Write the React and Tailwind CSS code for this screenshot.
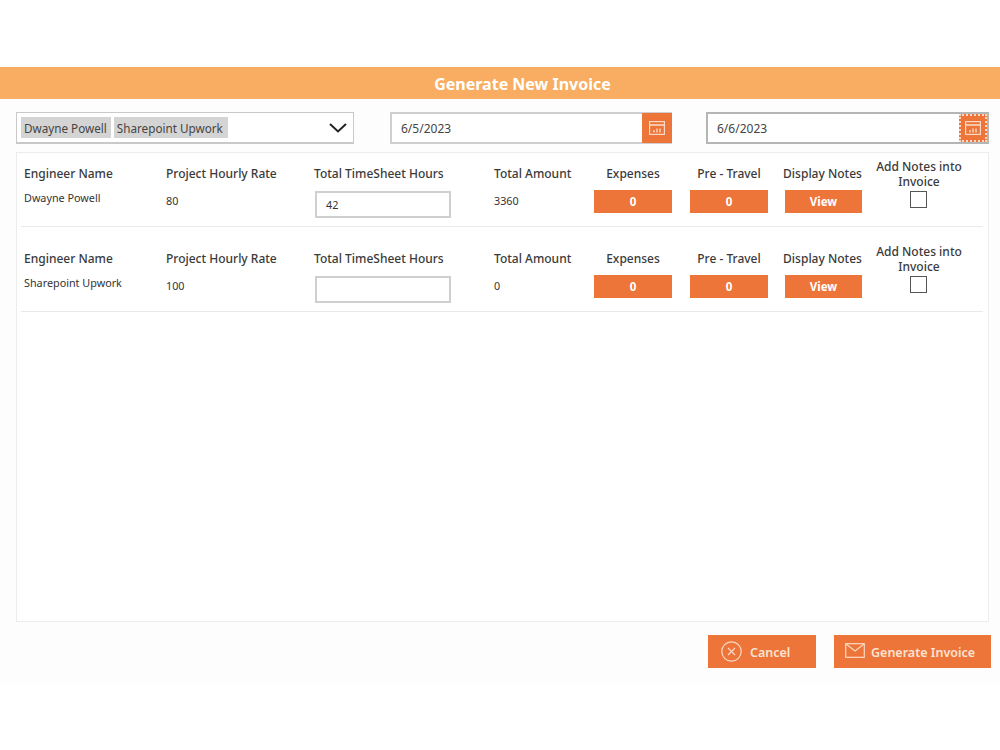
import React from 'react';

const rows = [
    { name: 'Dwayne Powell', rate: '80', hours: '42', amount: '3360', first: true },
    { name: 'Sharepoint Upwork', rate: '100', hours: '', amount: '0', first: false },
];

const CalendarIcon = () => (
    <svg width="18" height="16" viewBox="0 0 18 16" fill="none" stroke="#fbd9c4" strokeWidth="1.2">
        <rect x="1.6" y="1.6" width="14.8" height="12.8" />
        <path d="M1.6 5h14.8" strokeWidth="1.6" />
        <path d="M6 12.5v-2.5M9 12.5v-4M12 12.5v-4" strokeWidth="1.4" />
    </svg>
);

const OrangeButton = ({ children }) => (
    <div className="w-[78px] h-[23px] bg-[#ed7539] text-white text-[11.5px] font-bold flex items-center justify-center">{children}</div>
);

const Row = ({ row }) => (
    <div className={`mx-[4px] w-[962px] border-b border-[#e9e9e9] text-[#333] ${row.first ? 'pt-[5px]' : 'pt-[16px]'}`}>
        <div className="flex h-[32px] pb-[2px] items-center text-[12px] font-medium leading-[15px] text-[#3a3a3a]">
            <div className="w-[145px] pl-[3px]">Engineer Name</div>
            <div className="w-[148px]">Project Hourly Rate</div>
            <div className="w-[180px]">Total TimeSheet Hours</div>
            <div className="w-[100px]">Total Amount</div>
            <div className="w-[78px] text-center">Expenses</div>
            <div className="w-[18px]"></div>
            <div className="w-[78px] text-center">Pre - Travel</div>
            <div className="w-[15px]"></div>
            <div className="w-[79px] text-center whitespace-nowrap">Display Notes</div>
            <div className="w-[13px]"></div>
            <div className="w-[88px] pt-[2px] text-center leading-[15.5px]">Add Notes into Invoice</div>
        </div>
        <div className="flex h-[36px] items-start text-[10.8px]">
            <div className="w-[145px] pl-[3px] leading-[16px]">{row.name}</div>
            <div className="w-[148px] pt-[3px] leading-[16px]">{row.rate}</div>
            <div className="w-[180px] pl-[1px] pt-[1px]">
                <div className="w-[136px] h-[27px] border-2 border-[#cfcfcf] bg-white pl-[9px] pt-[1px] flex items-center">{row.hours}</div>
            </div>
            <div className="w-[100px] pt-[3px] leading-[16px]">{row.amount}</div>
            <OrangeButton>0</OrangeButton>
            <div className="w-[18px]"></div>
            <OrangeButton>0</OrangeButton>
            <div className="w-[17px]"></div>
            <div className="w-[77px]">
                <div className="h-[23px] bg-[#ed7539] text-white text-[11.5px] font-bold flex items-center justify-center">View</div>
            </div>
            <div className="w-[13px]"></div>
            <div className="w-[88px] pt-[1px] flex justify-center">
                <div className="w-[17px] h-[17px] border border-[#555] bg-white ml-[-2px]"></div>
            </div>
        </div>
    </div>
);

const App = () => {
    return (
        <div className="min-h-[750px] bg-white font-['Noto_Sans',sans-serif]">
            <div className="h-[67px]"></div>
            <div className="h-[32px] bg-[#f8ad62] flex items-center justify-center pt-[2px] text-white text-[16px] font-bold">
                <span className="ml-[45px]">Generate New Invoice</span>
            </div>
            <div className="h-[584px] bg-[#fdfdfd] pt-[13px] pl-[16px]">
                <div className="flex items-start h-[32px]">
                    <div className="w-[338px] h-[32px] bg-white border border-[#c9c9c9] border-b-2 flex items-center pl-[4px] text-[11.7px] text-[#444]">
                        <span className="bg-[#d4d4d4] h-[21px] pl-[3px] pr-[4px] pt-[2px] flex items-center">Dwayne Powell</span>
                        <span className="bg-[#d4d4d4] h-[21px] pl-[3px] pr-[5px] pt-[2px] flex items-center ml-[3px]">Sharepoint Upwork</span>
                        <svg className="ml-auto mr-[5px]" width="20" height="12" viewBox="0 0 20 12" fill="none" stroke="#222" strokeWidth="2">
                            <path d="M2 2l8 7.5L18 2" />
                        </svg>
                    </div>
                    <div className="ml-[36px] w-[282px] h-[32px] bg-white border-2 border-r-0 border-[#cfcfcf] flex items-center text-[12px] text-[#444]">
                        <span className="pl-[9px] pt-[1px]">6/5/2023</span>
                        <div className="ml-auto w-[30px] h-[30px] bg-[#ed7539] flex items-center justify-center">
                            <CalendarIcon />
                        </div>
                    </div>
                    <div className="ml-[34px] w-[283px] h-[32px] bg-white border-2 border-[#b5b5b5] flex items-center text-[12px] text-[#444]">
                        <span className="pl-[9px] pt-[1px]">6/6/2023</span>
                        <div className="ml-auto w-[28px] h-[28px] bg-[#ed7539] border-2 border-dotted border-[#fbd9c4] flex items-center justify-center">
                            <CalendarIcon />
                        </div>
                    </div>
                </div>
                <div className="mt-[8px] w-[973px] h-[470px] bg-white border border-[#ececec]">
                    {rows.map(r => <Row key={r.name} row={r} />)}
                </div>
                <div className="mt-[13px] flex justify-start pl-[692px] gap-[18px] text-[12.5px] font-semibold">
                    <button className="w-[108px] h-[33px] bg-[#ed7539] text-[#fbe3d5] flex items-center pl-[13px]">
                        <svg width="21" height="21" viewBox="0 0 21 21" fill="none" stroke="#fbd9c4" strokeWidth="1.2">
                            <circle cx="10.5" cy="10.5" r="9.7" />
                            <path d="M7 7l7 7M14 7l-7 7" />
                        </svg>
                        <span className="ml-[8px] pt-[4px]">Cancel</span>
                    </button>
                    <button className="w-[157px] h-[33px] bg-[#ed7539] text-[#fbe3d5] flex items-center pl-[11px]">
                        <svg className="mb-[3px]" width="20" height="15" viewBox="0 0 20 15" fill="none" stroke="#fbd9c4" strokeWidth="1.2">
                            <rect x="0.7" y="0.7" width="18.6" height="13.6" />
                            <path d="M0.7 0.7L10 8l9.3-7.3" />
                        </svg>
                        <span className="ml-[6px] pt-[4px] whitespace-nowrap">Generate Invoice</span>
                    </button>
                </div>
            </div>
        </div>
    );
};

export default App;
